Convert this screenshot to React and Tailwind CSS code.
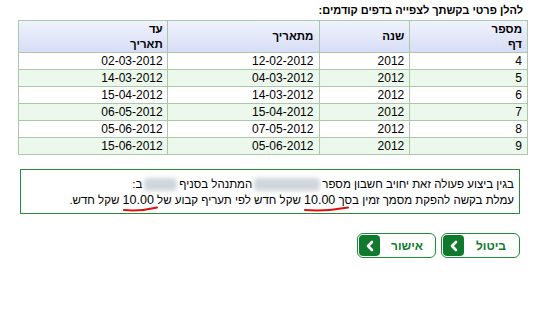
import React from "react";

const rows = [
  { page: "4", year: "2012", from: "12-02-2012", to: "02-03-2012" },
  { page: "5", year: "2012", from: "04-03-2012", to: "14-03-2012" },
  { page: "6", year: "2012", from: "14-03-2012", to: "15-04-2012" },
  { page: "7", year: "2012", from: "15-04-2012", to: "06-05-2012" },
  { page: "8", year: "2012", from: "07-05-2012", to: "05-06-2012" },
  { page: "9", year: "2012", from: "05-06-2012", to: "15-06-2012" },
];

function RedMark({ children, width }) {
  return (
    <span className="relative inline-block">
      {children}
      <svg
        className="absolute left-0 top-[14px] pointer-events-none"
        width={width}
        height="6"
        viewBox={`0 0 ${width} 6`}
      >
        <path
          d={`M1 4 Q ${width / 2} 5.5 ${width - 1} 1.5`}
          stroke="#e01010"
          strokeWidth="2"
          fill="none"
          strokeLinecap="round"
        />
      </svg>
    </span>
  );
}

function Blurred({ w }) {
  return (
    <span
      className={`inline-block align-middle h-[13px] mx-[2px] rounded-sm bg-gray-300 blur-[2px] ${w}`}
    />
  );
}

function GreenButton({ label }) {
  return (
    <button className="flex items-center w-[79px] h-[25px] rounded-[6px] border border-[#1f8a3a] bg-white p-[1px]">
      <span className="flex-1 text-center text-[12px] font-bold text-[#127a2e]">
        {label}
      </span>
      <span className="flex items-center justify-center w-[21px] h-[21px] rounded-[4px] bg-[#0f7a2c]">
        <svg width="10" height="12" viewBox="0 0 10 12">
          <path
            d="M7 2 L3 6 L7 10"
            stroke="white"
            strokeWidth="2.6"
            fill="none"
            strokeLinecap="round"
            strokeLinejoin="round"
          />
        </svg>
      </span>
    </button>
  );
}

export default function App() {
  return (
    <div
      dir="rtl"
      className="w-[537px] h-[309px] bg-white text-[12px] text-black pr-[9px] pt-[3px]"
      style={{ fontFamily: '"Liberation Sans", Arial, sans-serif' }}
    >
      <h1 className="text-[11px] font-bold leading-[15px] pr-[5px]">
        להלן פרטי בקשתך לצפייה בדפים קודמים:
      </h1>

      <table className="mt-[2px] w-[510px] border-collapse border border-[#a9c9a9] leading-[15px]">
        <thead>
          <tr className="bg-gradient-to-b from-[#f0f3fc] to-[#d6dcf6] h-[32px] text-[11.5px]">
            <th className="w-[118px] border border-[#a9c9a9] text-right font-bold pr-[5px] align-middle">
              מספר
              <br />
              דף
            </th>
            <th className="w-[90px] border border-[#a9c9a9] text-right font-bold pr-[5px] align-middle">
              שנה
            </th>
            <th className="w-[153px] border border-[#a9c9a9] text-right font-bold pr-[6px] align-middle">
              מתאריך
            </th>
            <th className="w-[149px] border border-[#a9c9a9] text-right font-bold pr-[4px] align-middle">
              עד
              <br />
              תאריך
            </th>
          </tr>
        </thead>
        <tbody>
          {rows.map((r, i) => (
            <tr key={r.page} className={`h-[17px] ${i % 2 ? "bg-[#ebf8eb]" : "bg-white"}`}>
              <td className="border border-[#a9c9a9] text-right pr-[5px]">{r.page}</td>
              <td className="border border-[#a9c9a9] text-right pr-[5px]">{r.year}</td>
              <td className="border border-[#a9c9a9] text-right pr-[6px]">{r.from}</td>
              <td className="border border-[#a9c9a9] text-right pr-[4px]">{r.to}</td>
            </tr>
          ))}
        </tbody>
      </table>

      <div className="mt-[14px] mr-[8px] w-[500px] h-[45px] border border-[#2b8a3e] pr-[5px] pt-[6px] leading-[16px] text-[11.5px]">
        <div>
          בגין ביצוע פעולה זאת יחויב חשבון מספר
          <Blurred w="w-[66px]" />
          המתנהל בסניף
          <Blurred w="w-[33px]" />
          ב:
        </div>
        <div>
          עמלת בקשה להפקת מסמך זמין{" "}
          <RedMark width={45}>
            בסך <span className="text-[12.5px]">10.00</span>
          </RedMark>{" "}
          שקל חדש לפי תעריף קבוע של{" "}
          <RedMark width={35}>
            <span className="text-[12.5px]">10.00</span>
          </RedMark>{" "}
          שקל חדש.
        </div>
      </div>

      <div className="mt-[19px] mr-[8px] flex gap-[5px]">
        <GreenButton label="ביטול" />
        <GreenButton label="אישור" />
      </div>
    </div>
  );
}
